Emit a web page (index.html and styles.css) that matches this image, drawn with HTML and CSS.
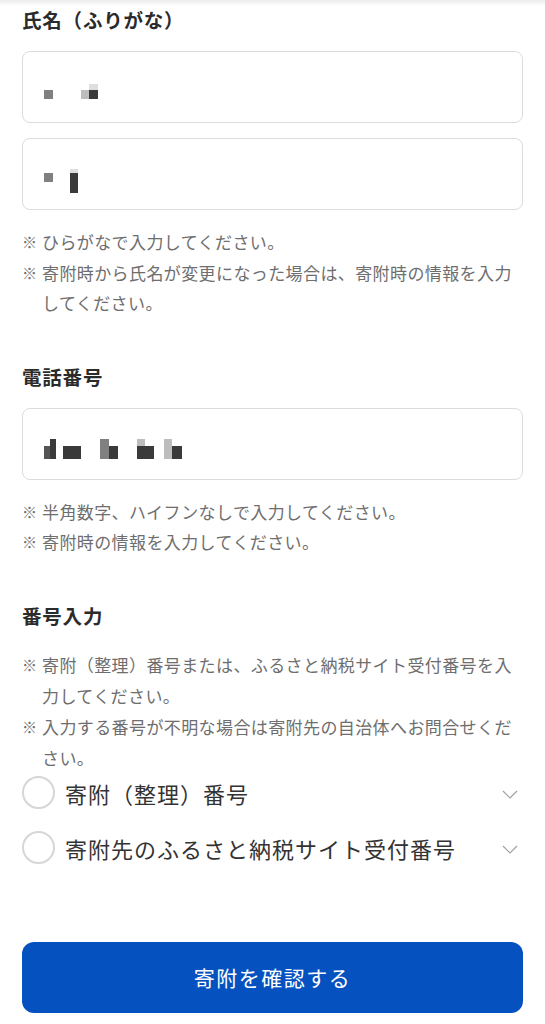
FILE: index.html
```html
<!DOCTYPE html>
<html lang="ja">
<head>
<meta charset="utf-8">
<title>寄附確認</title>
<link rel="stylesheet" href="styles.css">
</head>
<body>
<div class="topfade"></div>
<main class="form">
  <section class="field">
    <h2 class="label">氏名（ふりがな）</h2>
    <div class="inputs">
      <div class="input">
        <div class="mosaic m1">
          <span class="px w9 h9 mid"></span>
          <span class="gap24"></span>
          <span class="px w8 h9 light"></span>
          <span class="stack"><span class="px w9 h6 pale"></span><span class="px w9 h9 dark"></span></span>
        </div>
      </div>
      <div class="input">
        <div class="mosaic m2">
          <span class="px w9 h9 mid up"></span>
          <span class="gap17"></span>
          <span class="stack"><span class="px w8 h4 pale"></span><span class="px w8 h20 dark"></span></span>
        </div>
      </div>
    </div>
    <ul class="notes">
      <li><span class="mark">※</span><span>ひらがなで入力してください。</span></li>
      <li><span class="mark">※</span><span>寄附時から氏名が変更になった場合は、寄附時の情報を入力してください。</span></li>
    </ul>
  </section>

  <section class="field">
    <h2 class="label">電話番号</h2>
    <div class="inputs">
      <div class="input">
        <div class="mosaic m3">
          <span class="px w6 h13 dark2"></span>
          <span class="px w6 h20 dark"></span>
          <span class="gap7"></span>
          <span class="px w18 h13 dark"></span>
          <span class="gap19"></span>
          <span class="px w9 h20 mid"></span>
          <span class="px w9 h13 dark"></span>
          <span class="gap19"></span>
          <span class="stack"><span class="px w8 h7 light"></span><span class="px w8 h13 dark"></span></span>
          <span class="px w9 h13 dark"></span>
          <span class="gap10"></span>
          <span class="px w8 h20 light"></span>
          <span class="px w10 h13 dark"></span>
        </div>
      </div>
    </div>
    <ul class="notes">
      <li><span class="mark">※</span><span>半角数字、ハイフンなしで入力してください。</span></li>
      <li><span class="mark">※</span><span>寄附時の情報を入力してください。</span></li>
    </ul>
  </section>

  <section class="field">
    <h2 class="label">番号入力</h2>
    <ul class="notes notes-top">
      <li><span class="mark">※</span><span>寄附（整理）番号または、ふるさと納税サイト受付番号を入力してください。</span></li>
      <li><span class="mark">※</span><span>入力する番号が不明な場合は寄附先の自治体へお問合せください。</span></li>
    </ul>
    <div class="options">
      <label class="option">
        <span class="radio"></span>
        <span class="option-text">寄附（整理）番号</span>
        <svg class="chev" width="16" height="9" viewBox="0 0 16 9"><polyline points="1,1 8,8 15,1" fill="none" stroke="#a0a0a0" stroke-width="1.2"/></svg>
      </label>
      <label class="option">
        <span class="radio"></span>
        <span class="option-text">寄附先のふるさと納税サイト受付番号</span>
        <svg class="chev" width="16" height="9" viewBox="0 0 16 9"><polyline points="1,1 8,8 15,1" fill="none" stroke="#a0a0a0" stroke-width="1.2"/></svg>
      </label>
    </div>
  </section>

  <button class="submit" type="button">寄附を確認する</button>
</main>
</body>
</html>
```

FILE: styles.css
```css
* { box-sizing: border-box; }
html, body {
  margin: 0;
  padding: 0;
  background: #fff;
}
body {
  font-family: "Noto Sans CJK JP", "Noto Sans", sans-serif;
  color: #333;
  width: 545px;
}
.topfade {
  height: 6px;
  background: linear-gradient(to bottom, #ececec, #fff);
}
.form {
  padding: 0 22px;
  display: flex;
  flex-direction: column;
}
.field {
  display: flex;
  flex-direction: column;
}
.field + .field {
  margin-top: 44px;
}
.label {
  margin: 0;
  font-size: 19.5px;
  line-height: 28px;
  font-weight: 700;
  letter-spacing: 0.8px;
  color: #2b2b2b;
}
.inputs {
  margin-top: 17px;
  display: flex;
  flex-direction: column;
  gap: 15px;
}
.input {
  height: 72px;
  border: 1px solid #dcdcdc;
  border-radius: 8px;
  background: #fff;
  display: flex;
  align-items: center;
  padding-left: 21px;
}
.mosaic {
  display: flex;
  align-items: flex-end;
}
.m1 { margin-top: 8px; }
.m2 { margin-top: 14px; }
.m3 { margin-top: 10px; }
.stack { display: flex; flex-direction: column; }
.px { display: block; }
.up { margin-bottom: 11px; }
.w6 { width: 6px; } .w7 { width: 7px; } .w8 { width: 8px; } .w9 { width: 9px; } .w10 { width: 10px; } .w18 { width: 18px; }
.h4 { height: 4px; } .h6 { height: 6px; } .h7 { height: 7px; } .h9 { height: 9px; } .h13 { height: 13px; } .h20 { height: 20px; }
.gap7 { width: 7px; } .gap10 { width: 10px; } .gap17 { width: 17px; } .gap19 { width: 19px; } .gap24 { width: 28px; }
.dark { background: #3a3a3a; }
.dark2 { background: #555; }
.mid { background: #808080; }
.light { background: #bdbdbd; }
.pale { background: #dedede; }
.notes {
  list-style: none;
  margin: 17px 0 0;
  padding: 0;
  font-size: 17px;
  line-height: 30.5px;
  letter-spacing: 0.4px;
  color: #6e6e6e;
}
.notes-top {
  margin-top: 19px;
  line-height: 31px;
}
.notes li {
  display: flex;
}
.mark {
  flex: 0 0 20px;
  font-size: 15px;
  letter-spacing: 0;
}
.options {
  margin-top: -2px;
  display: flex;
  flex-direction: column;
  gap: 11px;
}
.option {
  height: 44px;
  display: flex;
  align-items: center;
}
.radio {
  width: 33px;
  height: 33px;
  border-radius: 50%;
  border: 2px solid #d6d6d6;
  flex: 0 0 33px;
}
.option-text {
  margin-left: 10px;
  font-size: 22px;
  letter-spacing: 1px;
  color: #333;
  flex: 1;
}
.chev {
  margin-right: 5px;
  margin-top: 4px;
}
.submit {
  margin-top: 72px;
  height: 71px;
  border: none;
  border-radius: 12px;
  background: #0551c0;
  color: #fff;
  font-family: "Noto Sans CJK JP", "Noto Sans", sans-serif;
  font-size: 21px;
  letter-spacing: 1.5px;
  width: 100%;
}
```
